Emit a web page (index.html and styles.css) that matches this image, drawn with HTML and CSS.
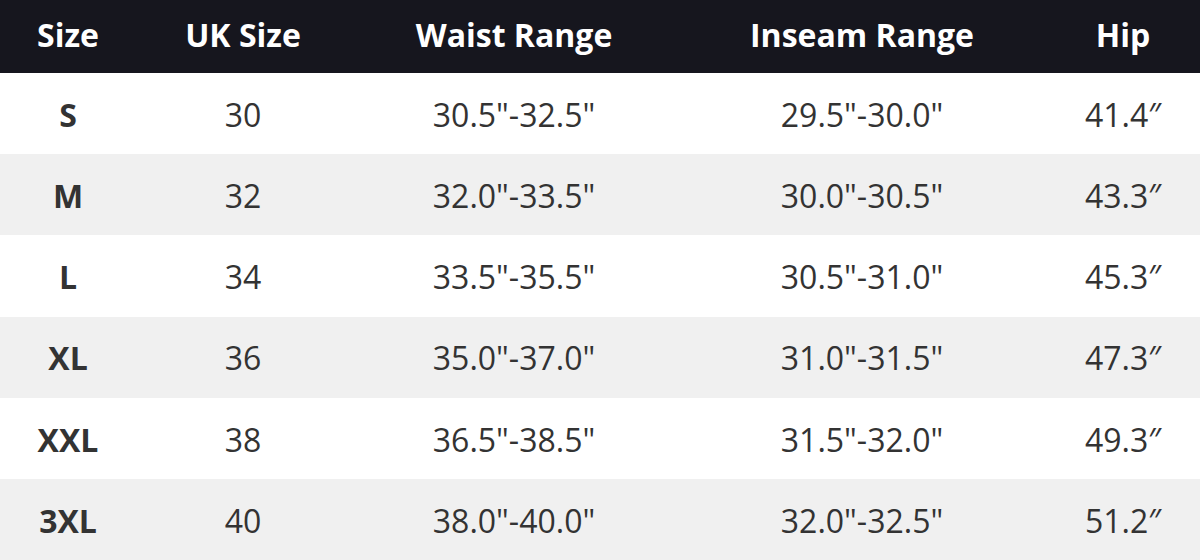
FILE: index.html
```html
<!DOCTYPE html>
<html>
<head>
<meta charset="utf-8">
<link rel="stylesheet" href="styles.css">
</head>
<body>
<table class="size-table">
  <colgroup>
    <col class="c1"><col class="c2"><col class="c3"><col class="c4"><col class="c5">
  </colgroup>
  <thead>
    <tr><th>Size</th><th>UK Size</th><th>Waist Range</th><th>Inseam Range</th><th>Hip</th></tr>
  </thead>
  <tbody>
    <tr><td class="sz">S</td><td>30</td><td>30.5"-32.5"</td><td>29.5"-30.0"</td><td>41.4″</td></tr>
    <tr><td class="sz">M</td><td>32</td><td>32.0"-33.5"</td><td>30.0"-30.5"</td><td>43.3″</td></tr>
    <tr><td class="sz">L</td><td>34</td><td>33.5"-35.5"</td><td>30.5"-31.0"</td><td>45.3″</td></tr>
    <tr><td class="sz">XL</td><td>36</td><td>35.0"-37.0"</td><td>31.0"-31.5"</td><td>47.3″</td></tr>
    <tr><td class="sz">XXL</td><td>38</td><td>36.5"-38.5"</td><td>31.5"-32.0"</td><td>49.3″</td></tr>
    <tr><td class="sz">3XL</td><td>40</td><td>38.0"-40.0"</td><td>32.0"-32.5"</td><td>51.2″</td></tr>
  </tbody>
</table>
</body>
</html>
```
FILE: styles.css
```css
html, body {
  margin: 0;
  padding: 0;
  background: #ffffff;
}
.size-table {
  width: 1200px;
  border-collapse: collapse;
  table-layout: fixed;
  font-family: "Open Sans", "Noto Sans", sans-serif;
  color: #333333;
}
.c1 { width: 136px; }
.c2 { width: 214px; }
.c3 { width: 328px; }
.c4 { width: 368px; }
.c5 { width: 154px; }
.size-table th {
  background: #16161e;
  color: #ffffff;
  font-weight: 700;
  font-size: 32px;
  line-height: 1.2;
  height: 71px;
  padding: 0 0 2px 0;
  text-align: center;
  vertical-align: middle;
}
.size-table td {
  height: 78.2px;
  padding: 3px 0 0 0;
  font-size: 32px;
  line-height: 1.2;
  text-align: center;
  vertical-align: middle;
}
.size-table td.sz {
  font-weight: 700;
}
.size-table tbody tr:nth-child(even) td {
  background: #f0f0f0;
}
```
